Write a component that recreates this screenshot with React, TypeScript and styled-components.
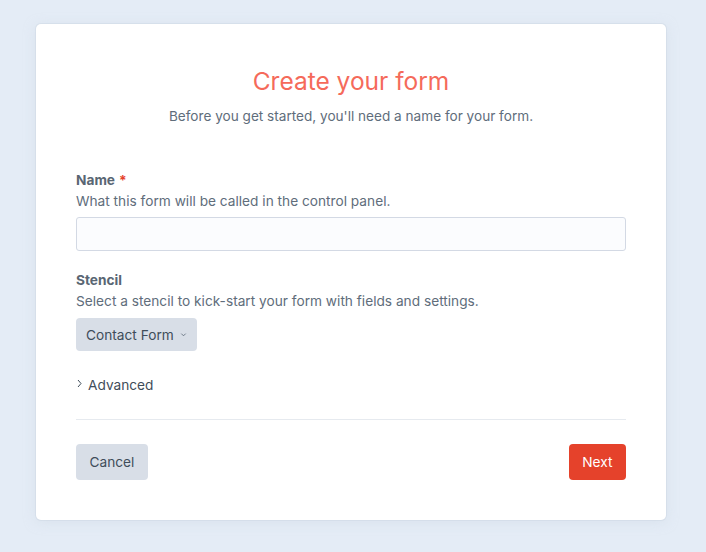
import styled, { createGlobalStyle } from "styled-components";

const GlobalStyle = createGlobalStyle`
  html, body {
    margin: 0;
    padding: 0;
    background: #e4ecf6;
  }
  body {
    font-family: Inter, "Noto Sans", "Liberation Sans", sans-serif;
    color: #3f4d5a;
    -webkit-font-smoothing: antialiased;
  }
`;

const Page = styled.div`
  width: 706px;
  height: 552px;
  box-sizing: border-box;
  padding: 24px 40px 32px 36px;
`;

const Card = styled.div`
  width: 630px;
  height: 496px;
  box-sizing: border-box;
  background: #fff;
  border-radius: 5px;
  box-shadow: 0 0 0 1px rgba(205, 216, 228, 0.5), 0 2px 12px rgba(205, 216, 228, 0.5);
  padding: 40px 40px 0;
  display: flex;
  flex-direction: column;
`;

const Header = styled.div`
  text-align: center;
  margin-bottom: 44px;
`;

const Title = styled.h1`
  margin: 0;
  font-size: 24.5px;
  font-weight: 400;
  line-height: 34px;
  color: #f56a5a;
`;

const Subtitle = styled.p`
  margin: 8px 0 0;
  font-size: 13.6px;
  line-height: 20px;
  color: #606d7b;
`;

const Field = styled.div`
  margin-bottom: 19px;
`;

const Label = styled.div`
  font-size: 13.7px;
  font-weight: 700;
  line-height: 20px;
  color: #596673;
`;

const Required = styled.span`
  color: #e5422b;
  margin-left: 4px;
`;

const Instructions = styled.div`
  font-size: 13.7px;
  line-height: 20px;
  color: #606d7b;
  margin: 1px 0 6px;
`;

const TextInput = styled.input`
  display: block;
  width: 100%;
  height: 34px;
  box-sizing: border-box;
  border: 1px solid #d3d9e4;
  border-radius: 3px;
  background: #fbfcfe;
  font: inherit;
  padding: 6px 9px;
  outline: none;
`;

const MenuButton = styled.button`
  display: inline-flex;
  align-items: center;
  gap: 6px;
  height: 33px;
  margin-top: 1px;
  padding: 0 10px;
  border: none;
  border-radius: 4px;
  background: #d8dee7;
  font-family: inherit;
  font-size: 13.7px;
  color: #3f4d5a;
  cursor: pointer;
`;

const Toggle = styled.div`
  display: flex;
  align-items: center;
  gap: 6px;
  font-size: 13.7px;
  color: #3f4d5a;
  margin-top: 7px;
  padding-left: 1px;
`;

const Divider = styled.hr`
  border: none;
  border-top: 1px solid #e6eaef;
  margin: 26px 0 24px;
`;

const Footer = styled.div`
  display: flex;
  justify-content: space-between;
`;

const Button = styled.button<{ $primary?: boolean }>`
  height: 36px;
  padding: 0 13.5px;
  border: none;
  border-radius: 4px;
  font-family: inherit;
  font-size: 13.7px;
  cursor: pointer;
  background: ${(p) => (p.$primary ? "#e5422b" : "#d8dee7")};
  color: ${(p) => (p.$primary ? "#fff" : "#3f4d5a")};
`;

const DownChevron = () => (
  <svg width="7" height="7" viewBox="0 0 8 8" fill="none">
    <path d="M1.5 3l2.5 2.5L6.5 3" stroke="#606d7b" strokeWidth="1" />
  </svg>
);

const RightChevron = () => (
  <svg width="5" height="9" viewBox="0 0 5 9" fill="none" style={{ marginTop: -4 }}>
    <path d="M1 1l3 3.5L1 8" stroke="#3f4d5a" strokeWidth="1" />
  </svg>
);

export default function App() {
  return (
    <>
      <GlobalStyle />
      <Page>
        <Card>
          <Header>
            <Title>Create your form</Title>
            <Subtitle>Before you get started, you'll need a name for your form.</Subtitle>
          </Header>

          <Field>
            <Label>
              Name<Required>*</Required>
            </Label>
            <Instructions>What this form will be called in the control panel.</Instructions>
            <TextInput type="text" />
          </Field>

          <Field>
            <Label>Stencil</Label>
            <Instructions>Select a stencil to kick-start your form with fields and settings.</Instructions>
            <MenuButton>
              Contact Form <DownChevron />
            </MenuButton>
          </Field>

          <Toggle>
            <RightChevron /> Advanced
          </Toggle>

          <Divider />

          <Footer>
            <Button>Cancel</Button>
            <Button $primary>Next</Button>
          </Footer>
        </Card>
      </Page>
    </>
  );
}
